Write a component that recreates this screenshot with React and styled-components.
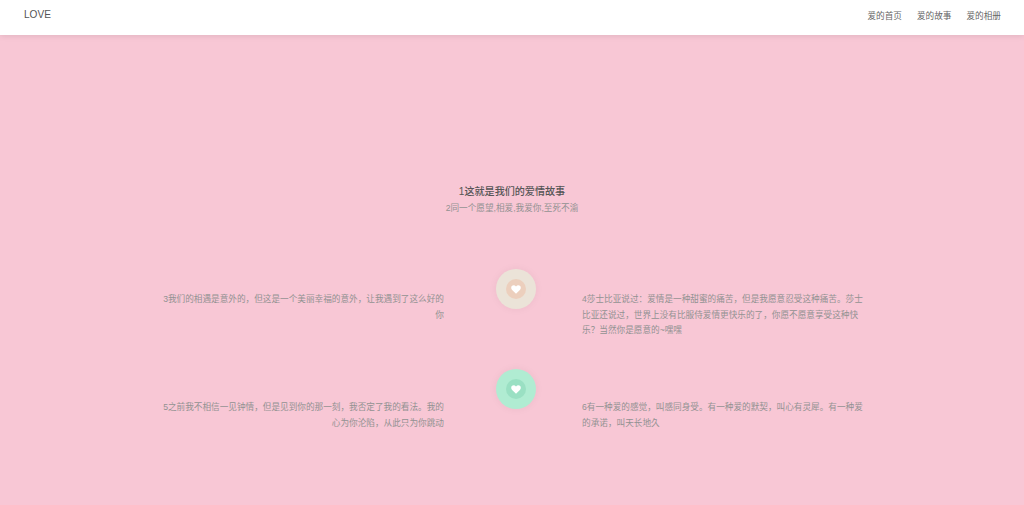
import styled, { createGlobalStyle } from "styled-components"

const GlobalStyle = createGlobalStyle`
    html, body {
        margin:0;
        padding:0;
        height:100%;
        overflow:hidden;
        background-color:#f8c7d5;
        font-family:"Liberation Sans","Noto Sans CJK SC",sans-serif;
    }
`;

const stories = [
    {
        left: "3我们的相遇是意外的，但这是一个美丽幸福的意外，让我遇到了这么好的你",
        right: "4莎士比亚说过：爱情是一种甜蜜的痛苦，但是我愿意忍受这种痛苦。莎士比亚还说过，世界上没有比服侍爱情更快乐的了，你愿不愿意享受这种快乐？当然你是愿意的~嘿嘿",
        outer: "#ebe3d8",
        inner: "#eccfbd",
        offset: 23,
    },
    {
        left: "5之前我不相信一见钟情，但是见到你的那一刻，我否定了我的看法。我的心为你沦陷，从此只为你跳动",
        right: "6有一种爱的感觉，叫感同身受。有一种爱的默契，叫心有灵犀。有一种爱的承诺，叫天长地久",
        outer: "#b0ecd2",
        inner: "#9ae0c3",
        offset: 31,
    },
];

const App = () => {
    return (
        <Page>
            <GlobalStyle />
            <Header>
                <Logo>LOVE</Logo>
                <Nav>
                    <NavLink>爱的首页</NavLink>
                    <NavLink>爱的故事</NavLink>
                    <NavLink>爱的相册</NavLink>
                </Nav>
            </Header>
            <Main>
                <Heading>
                    <Title>1这就是我们的爱情故事</Title>
                    <Subtitle>2同一个愿望,相爱,我爱你,至死不渝</Subtitle>
                </Heading>
                <Timeline>
                    {stories.map((story) => (
                        <Row key={story.left}>
                            <Story $align="right" $offset={story.offset}>{story.left}</Story>
                            <Badge $color={story.outer}>
                                <BadgeInner $color={story.inner}>
                                    <svg width="10" height="9" viewBox="0 0 24 22">
                                        <path
                                            fill="#fff"
                                            d="M12 21.5 2.6 12.1C-.5 9-.4 4.4 2.4 2 5.200-.3 9.400.2 12 3.500 14.600.2 18.800-.3 21.600 2c2.800 2.400 2.900 7-.2 10.100z"
                                        />
                                    </svg>
                                </BadgeInner>
                            </Badge>
                            <Story $align="left" $offset={story.offset}>{story.right}</Story>
                        </Row>
                    ))}
                </Timeline>
            </Main>
        </Page>
    )
}

const Page = styled.div`
    height:505px;
    overflow:hidden;
    background-color:#f8c7d5;
`;

const Header = styled.header`
    display:flex;
    justify-content:space-between;
    height:35px;
    padding:0 23px 0 24px;
    background-color:#fff;
    box-shadow:0 1px 6px rgb(0 0 0 / 10%);
`;

const Logo = styled.div`
    padding-top:9px;
    font-size:10.1px;
    line-height:12px;
    color:#555;
`;

const Nav = styled.nav`
    display:flex;
    gap:15px;
    padding-top:10px;
`;

const NavLink = styled.a`
    font-size:8.64px;
    line-height:13px;
    color:#666;
`;

const Main = styled.main`
    padding-top:149px;
`;

const Heading = styled.div`
    text-align:center;
`;

const Title = styled.h2`
    margin:0;
    font-size:10.08px;
    line-height:15px;
    font-weight:500;
    color:#555;
`;

const Subtitle = styled.p`
    margin:2px 0 0;
    font-size:8.64px;
    line-height:14px;
    color:#929292;
`;

const Timeline = styled.div`
    padding:54px 0 0 156px;
`;

const Row = styled.div`
    display:grid;
    grid-template-columns:288px 138px 288px;
    height:100px;
`;

const Story = styled.p`
    margin:0;
    padding-top:${(props) => props.$offset}px;
    font-size:8.64px;
    line-height:15.55px;
    color:#929292;
    text-align:${(props) => props.$align};
`;

const Badge = styled.div`
    display:flex;
    align-items:center;
    justify-content:center;
    width:40px;
    height:40px;
    margin-left:52px;
    border-radius:50%;
    background-color:${(props) => props.$color};
    box-shadow:0 0 8px rgb(0 0 0 / 5%);
`;

const BadgeInner = styled.div`
    display:flex;
    align-items:center;
    justify-content:center;
    width:20px;
    height:20px;
    border-radius:50%;
    background-color:${(props) => props.$color};
`;

export default App;
